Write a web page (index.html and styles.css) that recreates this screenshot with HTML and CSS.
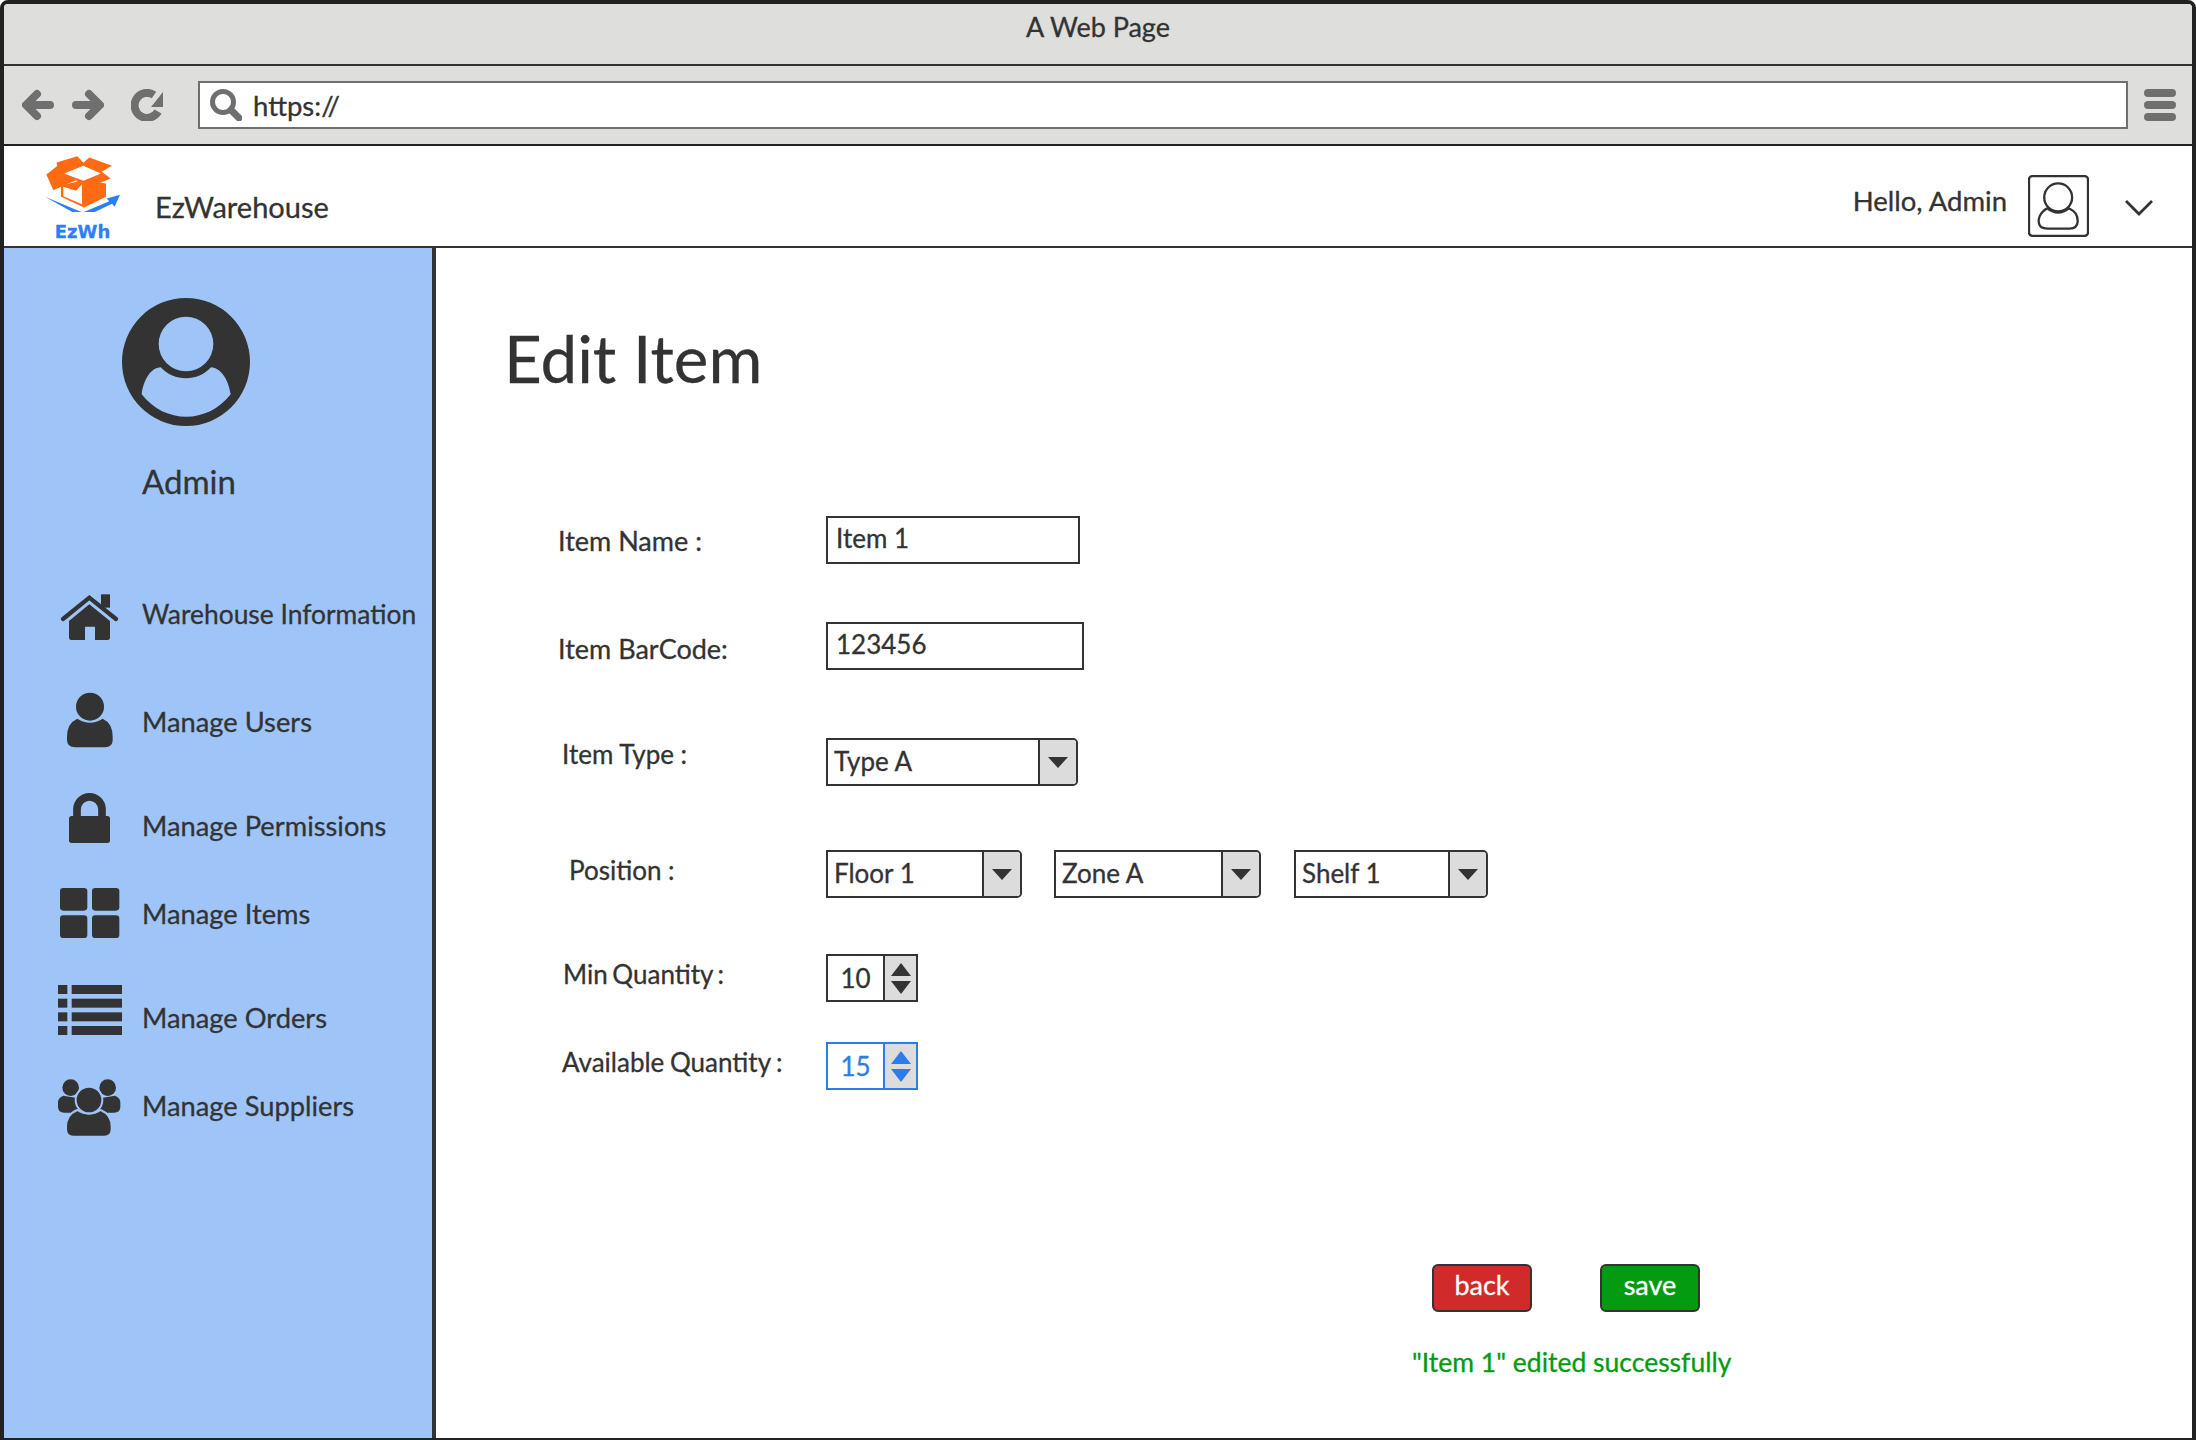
FILE: index.html
```html
<!DOCTYPE html>
<html lang="en">
<head>
    <meta charset="UTF-8">
    <title>A Web Page</title>
    <link rel="stylesheet" href="styles.css">
</head>

<body>
    <div class="window">
        <div class="titlebar">A Web Page</div>

        <div class="toolbar">
            <svg class="tool-icon" viewBox="0 0 32 32"><path d="M28 16H5M15 5 4 16l11 11" /></svg>
            <svg class="tool-icon" viewBox="0 0 32 32"><path d="M4 16h23M17 5l11 11-11 11" /></svg>
            <svg class="tool-icon tool-reload" viewBox="0 0 32 32">
                <path d="M27 22.500A12.500 12.500 0 1 1 23 6" stroke-linecap="butt" />
                <path class="solid" d="M32 3v15H20z" />
            </svg>
            <div class="address">
                <svg class="search-icon" viewBox="0 0 32 32">
                    <circle cx="13" cy="13" r="10.5" />
                    <path d="M21 21l8 8" />
                </svg>
                <span>https://</span>
            </div>
            <div class="burger"><i></i><i></i><i></i></div>
        </div>

        <div class="appbar">
            <div class="logo">
                <svg viewBox="135 465 225 170" class="logo-img">
                    <path fill="#ff6a13" d="M170 487l62-19 18 20 18-16 68 25-31 18 27 20-80 33-24-28-68 30-21-47 32-25z" />
                    <path fill="#ff6a13" d="M183 555l69-15 66 10v40l-66 32-69-32z" />
                    <path fill="#fff" d="M192 520l58-23 53 23-53 22zM190 560l38 12 18-20v60l-56-24z" />
                    <path fill="#2d7ff9" d="M135 590l113 47 80-34-8-8 40-11-16 36-8-9-88 42z" />
                </svg>
                <span>EzWh</span>
            </div>
            <div class="brand">EzWarehouse</div>
            <div class="hello">Hello, Admin</div>
            <svg class="user-box" viewBox="832 525 184 186">
                <rect x="835" y="528" width="178" height="180" rx="10" />
                <circle cx="923" cy="592" r="42" />
                <path d="M890 625C865 640 862 660 865 670q3 16 25 16h68q22 0 24-21c0-20-7-30-27-40q-32 25-65 0z" />
            </svg>
            <svg class="chevron" viewBox="0 0 28 17"><path d="M1 2l13 13L27 2" /></svg>
        </div>

        <div class="main">
            <div class="sidebar">
                <svg class="avatar" viewBox="366 114 384 384">
                    <path fill-rule="evenodd" d="M558 114a192 192 0 1 0 0 384 192 192 0 0 0 0-384zM558 170a82 82 0 1 1 0 164 82 82 0 0 1 0-164zM425 403c6-45 28-80 57-81 40 44 112 44 151 0 30 2 52 36 59 81-70 90-197 90-267 0z" />
                </svg>
                <div class="profile-name">Admin</div>

                <div class="nav">
                    <div class="nav-item">
                        <svg class="nav-icon" viewBox="174 983 192 180">
                            <path class="roof" d="M189 1079l79-64 80 64" />
                            <rect x="303" y="1005" width="27" height="40" />
                            <path d="M207 1085l61-50 62 50v50q0 7-7 7h-38v-40h-30v40h-41q-7 0-7-7z" />
                        </svg>
                        <span>Warehouse Information</span>
                    </div>
                    <div class="nav-item">
                        <svg class="nav-icon" viewBox="174 90 192 180">
                            <circle cx="270" cy="140" r="42" />
                            <path d="M232 176q38 24 76 0 30 14 30 54v10q0 22-23 22h-90q-24 0-24-22v-10q0-40 31-54z" />
                        </svg>
                        <span>Manage Users</span>
                    </div>
                    <div class="nav-item">
                        <svg class="nav-icon" viewBox="174 383 192 180">
                            <path class="shackle" d="M231 470v-23a37.500 37.500 0 0 1 75 0v23" />
                            <rect x="207" y="467" width="123" height="81" rx="8" />
                        </svg>
                        <span>Manage Permissions</span>
                    </div>
                    <div class="nav-item">
                        <svg class="nav-icon" viewBox="174 671 192 180">
                            <rect x="180" y="686" width="82" height="68" rx="10" />
                            <rect x="276" y="686" width="82" height="68" rx="10" />
                            <rect x="180" y="768" width="82" height="68" rx="10" />
                            <rect x="276" y="768" width="82" height="68" rx="10" />
                        </svg>
                        <span>Manage Items</span>
                    </div>
                    <div class="nav-item">
                        <svg class="nav-icon" viewBox="174 960 192 180">
                            <rect x="174" y="975" width="28" height="27" />
                            <rect x="215" y="975" width="151" height="27" />
                            <rect x="174" y="1016" width="28" height="27" />
                            <rect x="215" y="1016" width="151" height="27" />
                            <rect x="174" y="1057" width="28" height="27" />
                            <rect x="215" y="1057" width="151" height="27" />
                            <rect x="174" y="1098" width="28" height="27" />
                            <rect x="215" y="1098" width="151" height="27" />
                        </svg>
                        <span>Manage Orders</span>
                    </div>
                    <div class="nav-item">
                        <svg class="nav-icon" viewBox="174 1254 192 180">
                            <circle cx="212" cy="1283" r="25" />
                            <circle cx="323" cy="1283" r="25" />
                            <path d="M190 1307l45 8v43h-42q-19 0-19-17v-14q0-14 16-20zM345 1307l-45 8v43h42q19 0 19-17v-14q0-14-16-20z" />
                            <path class="cut" d="M232 1350q35 22 70 0 33 14 33 50v8q0 22-22 22h-93q-22 0-22-22v-8q0-36 34-50z" />
                            <circle class="cut" cx="267" cy="1320" r="40" />
                        </svg>
                        <span>Manage Suppliers</span>
                    </div>
                </div>
            </div>

            <div class="content">
                <h1>Edit Item</h1>

                <div class="form">
                    <div class="label label-name">Item Name :</div>
                    <div class="field"><div class="text-input input-name">Item 1</div></div>

                    <div class="label label-code">Item BarCode:</div>
                    <div class="field"><div class="text-input input-code">123456</div></div>

                    <div class="label label-type">Item Type :</div>
                    <div class="field">
                        <div class="select select-type"><span>Type A</span><b><i class="arrow-down"></i></b></div>
                    </div>

                    <div class="label label-position">Position :</div>
                    <div class="field field-position">
                        <div class="select select-floor"><span>Floor 1</span><b><i class="arrow-down"></i></b></div>
                        <div class="select select-zone"><span>Zone A</span><b><i class="arrow-down"></i></b></div>
                        <div class="select select-shelf"><span>Shelf 1</span><b><i class="arrow-down"></i></b></div>
                    </div>

                    <div class="label label-min">Min Quantity :</div>
                    <div class="field">
                        <div class="spinner"><span>10</span><b><i class="arrow-up"></i><i class="arrow-down"></i></b></div>
                    </div>

                    <div class="label label-available">Available Quantity :</div>
                    <div class="field">
                        <div class="spinner spinner-focus"><span>15</span><b><i class="arrow-up"></i><i class="arrow-down"></i></b></div>
                    </div>
                </div>

                <div class="actions">
                    <div class="btn btn-back">back</div>
                    <div class="btn btn-save">save</div>
                </div>
                <p class="message">"Item 1" edited successfully</p>
            </div>
        </div>
    </div>
</body>
</html>
```

FILE: styles.css
```css
* {
   font-family: Lato, "Noto Sans", sans-serif;
   box-sizing: border-box;
}

body {
   margin: 0;
   background-color: #fff;
   color: #333;
   -webkit-text-stroke: 0.3px currentColor; /* the mockup font is heavier than Lato regular */
}

.window {
   display: flex;
   flex-direction: column;
   width: 2196px;
   height: 1440px;
   border: 4px solid #222;
   border-bottom-width: 2px;
   border-radius: 8px 8px 0 0;
   overflow: hidden;
}

/* browser chrome */
.titlebar {
   height: 62px;
   flex: none;
   background-color: #dededc;
   border-bottom: 2px solid #333;
   text-align: center;
   font-size: 27px;
   line-height: 46px;
}

.toolbar {
   display: flex;
   align-items: center;
   height: 80px;
   flex: none;
   padding-left: 18px;
   background-color: #dededc;
   border-bottom: 2px solid #222;
}

.tool-icon {
   width: 32px;
   height: 32px;
   margin-right: 18px;
   fill: none;
   stroke: #6f6f6f;
   stroke-width: 8;
   stroke-linecap: round;
   stroke-linejoin: round;
}

.tool-icon .solid {
   fill: #6f6f6f;
   stroke: none;
}

.tool-reload {
   margin-left: 9px;
   margin-right: 35px;
}

.address {
   display: flex;
   align-items: center;
   width: 1930px;
   height: 48px;
   padding-left: 10px;
   background-color: #fff;
   border: 2px solid #6f6f6f;
   font-size: 27.5px;
}

.search-icon {
   width: 32px;
   height: 32px;
   margin-right: 11px;
   fill: none;
   stroke: #6f6f6f;
   stroke-width: 5;
   stroke-linecap: round;
}

.search-icon path {
   stroke-width: 7;
}

.burger {
   display: flex;
   flex-direction: column;
   gap: 4px;
   margin-left: 16px;
}

.burger i {
   display: block;
   width: 32px;
   height: 8px;
   background-color: #6f6f6f;
   border-radius: 4px;
}

/* app header */
.appbar {
   display: flex;
   height: 102px;
   flex: none;
   background-color: #fff;
   border-bottom: 2px solid #333;
}

.logo {
   display: flex;
   flex-direction: column;
   align-items: center;
   width: 75px;
   margin-left: 41px;
   padding-top: 9px;
}

.logo-img {
   display: block;
   width: 75px;
   height: 57px;
}

.logo span {
   font-family: "DejaVu Sans", sans-serif;
   font-size: 18px;
   font-weight: 700;
   line-height: 20px;
   color: #2d7ff9;
   margin-top: 10px;
}

.brand {
   margin-left: 35px;
   padding-top: 43px;
   font-size: 29px;
}

.hello {
   margin-left: auto;
   padding-top: 38px;
   font-size: 27.500px;
}

.user-box {
   width: 61px;
   height: 62px;
   margin: 29px 0 0 21px;
   fill: none;
   stroke: #333;
   stroke-width: 7;
}

.chevron {
   width: 28px;
   height: 17px;
   margin: 53px 39px 0 36px;
   fill: none;
   stroke: #333;
   stroke-width: 2.800;
}

.main {
   display: flex;
   flex: 1;
   min-height: 0;
}

/* sidebar */
.sidebar {
   width: 432px;
   flex: none;
   padding-top: 50px;
   background-color: #9fc4f8;
   border-right: 4px solid #333;
}

.avatar {
   display: block;
   width: 128px;
   height: 128px;
   margin-left: 118px;
   fill: #333;
}

.profile-name {
   margin: 34px 0 0 138px;
   font-size: 33px;
   line-height: 42px;
}

.nav {
   display: grid;
   grid-template-rows: 103px 98px 95px 97px 98px 60px;
   margin-top: 85px;
}

.nav-item {
   display: grid;
   grid-template-columns: 84px 1fr;
   align-items: start;
   padding-left: 54px;
   font-size: 27.3px;
   line-height: 32px;
}

.nav-item:first-child {
   font-size: 26.4px;
}

.nav-icon {
   display: block;
   width: 64px;
   height: 60px;
   fill: #333;
}

.nav-item .roof {
   fill: none;
   stroke: #333;
   stroke-width: 13;
   stroke-linecap: round;
}

.nav-item .shackle {
   fill: none;
   stroke: #333;
   stroke-width: 23;
}

.nav-item .cut {
   stroke: #9fc4f8;
   stroke-width: 6;
}

.nav-item span {
   margin-top: 22px;
   white-space: nowrap;
}

.nav-item:nth-child(1) span { margin-top: 11px; }
.nav-item:nth-child(2) span { margin-top: 16px; }
.nav-item:nth-child(4) span { margin-top: 15px; }
.nav-item:nth-child(6) span { margin-top: 12px; }

/* content */
.content {
   flex: 1;
   padding: 69px 0 0 68px;
   background-color: #fff;
}

h1 {
   margin: 0;
   font-size: 65.500px;
   font-weight: 400;
   line-height: 82px;
}

.form {
   display: grid;
   grid-template-columns: 322px 1fr;
   grid-template-rows: 106px 116px 112px 104px 88px 48px;
   margin-top: 117px;
   font-size: 26px;
}

.label {
   white-space: nowrap;
   line-height: 32px;
}

.label-name { margin: 9px 0 0 54px; font-size: 27px; }
.label-code { margin: 11px 0 0 54px; font-size: 27px; }
.label-type { margin: 0 0 0 58px; }
.label-position { margin: 4px 0 0 65px; }
.label-min { margin: 4px 0 0 59px; word-spacing: -2px; }
.label-available { margin: 4px 0 0 58px; word-spacing: -1px; }

.field-position {
   display: flex;
}

.text-input,
.select,
.spinner {
   height: 48px;
   background-color: #fff;
   border: 2px solid #333;
   line-height: 40px;
}

.text-input {
   padding-left: 8px;
}

.input-name { width: 254px; }
.input-code { width: 258px; }

.select {
   display: flex;
   justify-content: space-between;
   border-radius: 0 5px 5px 0;
}

.select span {
   padding: 1px 0 0 6px;
}

.select b {
   display: flex;
   align-items: center;
   justify-content: center;
   width: 38px;
   background-color: #dcdcdc;
   border-left: 2px solid #333;
   border-radius: 0 3px 3px 0;
}

.select-type { width: 252px; }
.select-floor { width: 196px; }
.select-zone { width: 207px; margin-left: 32px; }
.select-shelf { width: 194px; margin-left: 33px; }

.arrow-down,
.arrow-up {
   display: block;
   width: 0;
   height: 0;
   border-left: 10px solid transparent;
   border-right: 10px solid transparent;
}

.arrow-down {
   border-top: 11px solid #333;
}

.arrow-up {
   border-bottom: 13px solid #333;
}

.spinner {
   display: flex;
   width: 92px;
   text-align: center;
}

.spinner span {
   width: 55px;
   line-height: 44px;
}

.spinner b {
   display: flex;
   flex-direction: column;
   align-items: center;
   justify-content: center;
   gap: 5px;
   flex: 1;
   background-color: #dcdcdc;
   border-left: 2px solid #333;
}

.spinner b .arrow-down {
   border-top-width: 13px;
}

.spinner-focus {
   color: #2b7de9;
   border-color: #2b7de9;
}

.spinner-focus b {
   border-left-color: #2b7de9;
}

.spinner-focus .arrow-up {
   border-bottom-color: #2b7de9;
}

.spinner-focus b .arrow-down {
   border-top-color: #2b7de9;
}

/* buttons */
.actions {
   display: flex;
   gap: 68px;
   margin: 174px 0 0 928px;
}

.btn {
   width: 100px;
   height: 48px;
   border: 2px solid #333;
   border-radius: 6px;
   color: #fff;
   text-align: center;
   font-size: 27px;
   line-height: 38px;
}

.btn-back {
   background-color: #d02a2a;
}

.btn-save {
   background-color: #049b10;
}

.message {
   margin: 34px 0 0 908px;
   color: #049b10;
   font-size: 26.5px;
   line-height: 32px;
}
```
